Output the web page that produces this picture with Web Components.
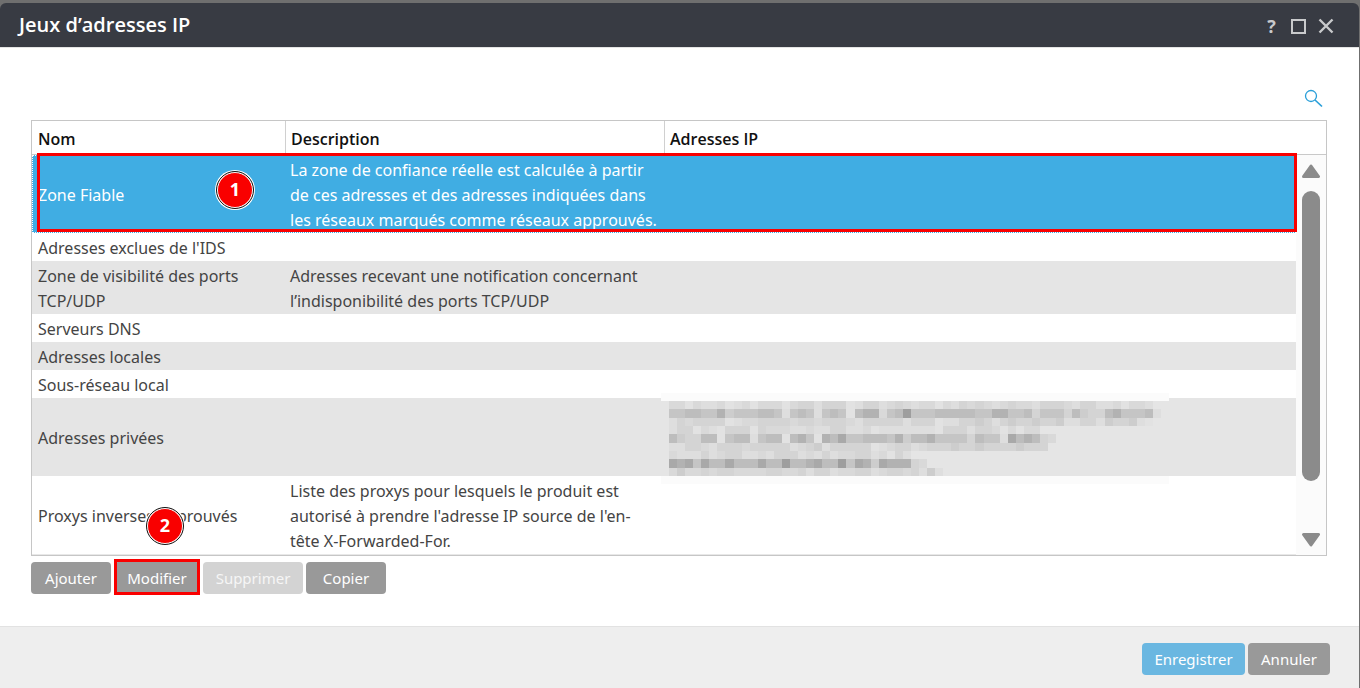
<!DOCTYPE html>
<html lang="fr">
<head>
<meta charset="utf-8">
<title>Jeux d’adresses IP</title>
<style>
  html { background: #6f6f6f; }
  body { margin: 0; font: 16px/25px "Noto Sans", "Open Sans", sans-serif; color: #444; }
</style>
</head>
<body>
<ip-dialog heading="Jeux d’adresses IP">
  <search-button></search-button>
  <ip-table></ip-table>
  <button-bar>
    <ui-button style="--w:80px">Ajouter</ui-button>
    <ui-button style="--w:86px" marked>Modifier<step-badge slot="badge" style="top:-54px;left:33px">2</step-badge></ui-button>
    <ui-button style="--w:100px" disabled>Supprimer</ui-button>
    <ui-button style="--w:80px">Copier</ui-button>
  </button-bar>
  <ui-button slot="footer" primary style="--w:103px">Enregistrer</ui-button>
  <ui-button slot="footer" style="--w:82px">Annuler</ui-button>
</ip-dialog>

<script>
class Base extends HTMLElement {
  constructor() {
    super();
    this.attachShadow({ mode: 'open' });
  }
  connectedCallback() {
    if (!this.shadowRoot.childNodes.length) this.shadowRoot.innerHTML = this.render();
  }
}

customElements.define('ip-dialog', class extends Base {
  render() {
    return `<style>
      :host { display: flex; flex-direction: column; box-sizing: border-box; min-height: 100vh; padding: 3px 1px 0 0; }
      header { display: flex; align-items: center; justify-content: space-between; height: 44px; padding: 0 25px 0 19px;
        background: #383b43; border-radius: 6px 6px 0 0; color: #fff; }
      h1 { margin: 0; font: 600 20px/44px "Open Sans", sans-serif; }
      .tools { display: flex; gap: 10px; padding-top: 2px; }
      .tools button { display: flex; align-items: center; justify-content: center; width: 17px; height: 18px; padding: 0; border: 0; background: none;
        color: #c9cacc; font: 700 18px/18px "Open Sans", sans-serif; }
      main { flex: 1; background: #fff; padding: 40px 32px 32px 31px; border-top: 1px solid #e4e4e4; box-sizing: border-box; }
      footer { display: flex; justify-content: flex-end; gap: 3px; padding: 16px 29px 13px; background: #eee; border-top: 1px solid #e2e2e2; }
    </style>
    <header><h1>${this.getAttribute('heading')}</h1>
      <div class="tools">
        <button type="button" aria-label="Aide">?</button>
        <button type="button" aria-label="Agrandir"><svg width="15" height="15"><rect x="1" y="1" width="13" height="13" fill="none" stroke="#c9cacc" stroke-width="2"/></svg></button>
        <button type="button" aria-label="Fermer"><svg width="16" height="16"><path d="M1.5 1.5 14.5 14.5M14.5 1.5 1.5 14.5" stroke="#c9cacc" stroke-width="2.4"/></svg></button>
      </div></header>
    <main><slot></slot></main>
    <footer><slot name="footer"></slot></footer>`;
  }
});

customElements.define('search-button', class extends Base {
  render() {
    return `<style>
      :host { display: flex; justify-content: flex-end; padding-right: 3px; margin-bottom: 12px; }
      button { width: 20px; height: 20px; padding: 0; border: 0; background: none; }
      svg { display: block; }
    </style>
    <button type="button" aria-label="Rechercher"><svg width="20" height="20" fill="none" stroke="#2a9fd9"><circle cx="7" cy="8" r="5.5" stroke-width="1.3"/><path d="M11 12 18 18.5" stroke-width="1.7"/></svg></button>`;
  }
});

customElements.define('step-badge', class extends Base {
  render() {
    return `<style>
      :host { position: absolute; box-sizing: border-box; width: 36px; height: 36px; border: 1px solid #fff; outline: 1px solid #111;
        border-radius: 50%; background: #f90000; color: #fff; text-align: center; z-index: 3;
        font: 700 18px/33px "Open Sans", sans-serif; box-shadow: 0 0 0 2px #fff; }
    </style><slot></slot>`;
  }
});

customElements.define('button-bar', class extends Base {
  render() {
    return `<style>:host { display: flex; gap: 3px; margin-top: 6px; }</style><slot></slot>`;
  }
});

customElements.define('ui-button', class extends Base {
  render() {
    return `<style>
      :host { display: block; position: relative; }
      button { display: block; width: var(--w); height: 32px; padding: 0; border: 0; border-radius: 4px; background: #999;
        color: #fff; font: 15px/32px "Noto Sans", sans-serif; white-space: nowrap; }
      :host([primary]) button { background: #6ab7e1; }
      button:disabled { background: #d3d3d3; color: #f6f6f6; }
      .mark { display: none; }
      :host([marked]) .mark { display: block; position: absolute; inset: -3px 0 -1px; border: 3px solid #f90000; pointer-events: none; }
    </style>
    <button type="button" ${this.hasAttribute('disabled') ? 'disabled' : ''}><slot></slot></button>
    <div class="mark"></div><slot name="badge"></slot>`;
  }
});

/* Masked addresses: each digit is the darkness of one mosaic tile. */
const MASK = [
  '220211201202220233133301331232122021323212322133321331120221',
  '5566557455566515651565067725695556666655775563555364336755561',
  '132333301223333233233321333331333011334313433433411331433410',
  '1330210333032221121133112011111110333133202022',
  '643366056615660675076855666574667555536551867632',
  '11332133323333312341333330123312333433433334333',
  '211131233112133312131223312031',
  '87858668666866966786695874877732',
  '2422323322223322313312233123323141'
];
const SHADES = ['#e2e2e2', '#dedede', '#d9d9d9', '#d4d4d4', '#cdcdcd', '#c5c5c5', '#bdbdbd', '#b2b2b2', '#a9a9a9', '#9e9e9e'];

customElements.define('masked-text', class extends Base {
  render() {
    const tiles = MASK.map((row, y) => [...row].map((d, x) =>
      `<rect x="${x}" y="${y}" width="1" height="1" fill="${SHADES[d]}"/>`).join('')).join('');
    return `<style>
      :host { display: block; position: relative; z-index: 1; }
      :host::before { content: ""; position: absolute; left: -8px; top: -8px; width: 508px; height: 91px; z-index: -1;
        background: linear-gradient(#fbfbfb 8px, #e5e5e5 8px 83px, #fbfbfb 83px); }
      svg { display: block; width: 492px; height: 75px; }
    </style>
    <svg viewBox="0 0 61 9" preserveAspectRatio="none" shape-rendering="crispEdges" role="img" aria-label="Adresses masquées">${tiles}</svg>`;
  }
});

const ROWS = [
  ['Zone Fiable', 'La zone de confiance réelle est calculée à partir<br>de ces adresses et des adresses indiquées dans<br>les réseaux marqués comme réseaux approuvés.', ''],
  ["Adresses exclues de l'IDS", '', ''],
  ['Zone de visibilité des ports<br>TCP/UDP', 'Adresses recevant une notification concernant<br>l’indisponibilité des ports TCP/UDP', ''],
  ['Serveurs DNS', '', ''],
  ['Adresses locales', '', ''],
  ['Sous-réseau local', '', ''],
  ['Adresses privées', '', '<masked-text></masked-text>'],
  ['Proxys inverses approuvés', "Liste des proxys pour lesquels le produit est<br>autorisé à prendre l'adresse IP source de l'en-<br>tête X-Forwarded-For.", '']
];

customElements.define('ip-table', class extends Base {
  render() {
    return `<style>
      :host { display: grid; grid-template-columns: 1fr 30px; position: relative; border: 1px solid #c6c6c6; }
      table { width: 100%; border-collapse: separate; border-spacing: 0; table-layout: fixed; }
      th { box-sizing: border-box; height: 34px; padding: 4px 6px 0; text-align: left; border-bottom: 1px solid #c9c9c9; border-right: 1px solid #d0d0d0;
        font: 600 16px/25px "Open Sans", sans-serif; color: #111; }
      th:not(:first-child) { padding-left: 5px; }
      th:last-child { border-right: 0; }
      td { padding: 3px 4px 0; white-space: nowrap; vertical-align: middle; }
      td:first-child { padding-left: 6px; }
      tbody tr:nth-child(odd) td { background: #e5e5e5; }
      tbody tr:first-child td { background: #40ade3; color: #fff; }
      tbody tr:first-child { outline: 1px dotted #fff; outline-offset: -1px; }
      tbody tr:last-child td { border-bottom: 1px solid #e8e8e8; }
      .frame { position: absolute; top: 32px; left: 5px; right: 29px; height: 79px; box-sizing: border-box; border: 3px solid #f90000; z-index: 2; }
      .bar { display: flex; flex-direction: column; align-items: center; }
      .cap { align-self: stretch; box-sizing: border-box; height: 34px; border-bottom: 1px solid #c9c9c9; }
      .track { flex: 1; align-self: stretch; display: flex; flex-direction: column; align-items: center; padding: 9px 0 8px; background: #fbfbfb; }
      .thumb { width: 18px; flex: 290; margin-top: 13px; border-radius: 9px; background: #8b8b8b; }
      .rest { flex: 52; }
      svg { display: block; fill: #8b8b8b; stroke: #8b8b8b; stroke-width: 3; stroke-linejoin: round; }
      step-badge { top: 51px; left: 185px; }
    </style>
    <table>
      <colgroup><col style="width:254px"><col style="width:379px"><col></colgroup>
      <thead><tr><th scope="col">Nom</th><th scope="col">Description</th><th scope="col">Adresses IP</th></tr></thead>
      <tbody>${ROWS.map(r => `<tr>${r.map(c => `<td>${c}</td>`).join('')}</tr>`).join('')}</tbody>
    </table>
    <div class="bar"><div class="cap"></div>
      <div class="track">
        <svg width="18" height="14"><path d="M9 2 16.5 12.5H1.5Z"/></svg>
        <div class="thumb"></div><div class="rest"></div>
        <svg width="18" height="14"><path d="M9 12 16.5 1.5H1.5Z"/></svg>
      </div>
    </div>
    <div class="frame"></div><step-badge>1</step-badge>`;
  }
});
</script>
</body>
</html>
